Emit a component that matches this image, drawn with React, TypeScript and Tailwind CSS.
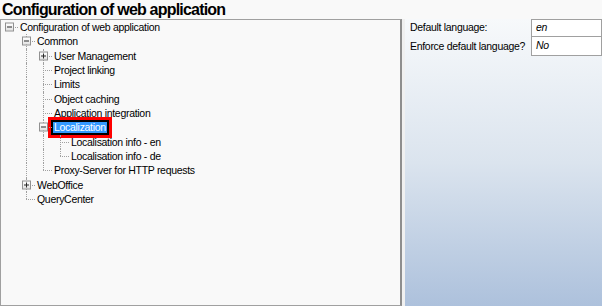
import React from "react";

type Node = { label: string; children?: Node[]; expanded?: boolean; hasChildren?: boolean; selected?: boolean };

const tree: Node = {
  label: "Configuration of web application",
  expanded: true,
  children: [
    {
      label: "Common",
      expanded: true,
      children: [
        { label: "User Management", hasChildren: true },
        { label: "Project linking" },
        { label: "Limits" },
        { label: "Object caching" },
        { label: "Application integration" },
        {
          label: "Localization",
          expanded: true,
          selected: true,
          children: [{ label: "Localisation info - en" }, { label: "Localisation info - de" }],
        },
        { label: "Proxy-Server for HTTP requests" },
      ],
    },
    { label: "WebOffice", hasChildren: true },
    { label: "QueryCenter" },
  ],
};

type Row = { node: Node; depth: number; moreAt: boolean[]; isLast: boolean };

function flatten(n: Node, depth: number, moreAt: boolean[], isLast: boolean, out: Row[]) {
  out.push({ node: n, depth, moreAt, isLast });
  if (n.expanded && n.children) {
    n.children.forEach((c, i) => {
      const last = i === n.children!.length - 1;
      flatten(c, depth + 1, [...moreAt, depth === 0 ? false : !isLast], last, out);
    });
  }
}

function Expander({ open }: { open: boolean }) {
  return (
    <div className="absolute left-[4px] top-1/2 -translate-y-1/2 w-[9px] h-[9px] border border-[#919191] bg-gradient-to-b from-white to-[#e2e2e2] flex items-center justify-center">
      <div className="relative w-[5px] h-[5px]">
        <div className="absolute left-0 top-[2px] w-[5px] h-[1px] bg-[#2b2b2b]" />
        {!open && <div className="absolute top-0 left-[2px] w-[1px] h-[5px] bg-[#2b2b2b]" />}
      </div>
    </div>
  );
}

function TreeRow({ row }: { row: Row }) {
  const { node, depth, moreAt, isLast } = row;
  const hasKids = !!(node.children || node.hasChildren);
  const cols = [];
  for (let k = 0; k < depth; k++) {
    cols.push(
      <div key={k} className="relative w-[17px] h-full shrink-0">
        {moreAt[k + 1] && <div className="absolute left-[8px] top-0 bottom-0 border-l border-dotted border-[#a0a0a0]" />}
      </div>
    );
  }
  return (
    <div className="flex h-[14.33px] items-stretch">
      {cols}
      <div className="relative w-[17px] h-full shrink-0">
        {depth > 0 && (
          <div
            className={
              "absolute left-[8px] top-0 border-l border-dotted border-[#a0a0a0] " + (isLast ? "h-1/2" : "bottom-0")
            }
          />
        )}
        <div className="absolute left-[8px] right-0 top-1/2 border-t border-dotted border-[#a0a0a0]" />
        {hasKids && <Expander open={!!node.expanded} />}
      </div>
      {node.selected ? (
        <span className="ml-[-1px] h-full flex items-center px-[1px] bg-[#3399ff] text-white border-2 border-black outline-[3px] outline-solid outline-[#ff0000] whitespace-nowrap leading-none">
          {node.label}
        </span>
      ) : (
        <span className="ml-[2px] h-full flex items-center text-black whitespace-nowrap leading-none">{node.label}</span>
      )}
    </div>
  );
}

export default function App() {
  const rows: Row[] = [];
  flatten(tree, 0, [false], true, rows);
  return (
    <div
      className="w-[602px] h-[306px] bg-[#f9f9f9] flex flex-col overflow-hidden"
      style={{ fontFamily: '"Liberation Sans", Arial, sans-serif' }}
    >
      <div className="h-[19px] pl-[2px] text-[16px] font-bold leading-[20px] tracking-[-0.8px] text-black">
        Configuration of web application
      </div>
      <div className="flex flex-1 min-h-0 text-[10.5px] tracking-[-0.3px]">
        <div className="w-[402px] border-t border-l border-b border-r-2 border-[#a0a0a0] border-r-[#8e8e8e] bg-[#f9f9f9] shrink-0">
          {rows.map((r, i) => (
            <TreeRow key={i} row={r} />
          ))}
        </div>
        <div className="w-[3px] shrink-0 bg-[#f0f0f0]" />
        <div className="flex-1 bg-gradient-to-b from-[#f7f9fb] via-[#dbe4ee] to-[#adc1dc]">
          <div className="flex h-[18px]">
            <div className="w-[126px] pl-[5px] flex items-center text-black whitespace-nowrap">Default language:</div>
            <div className="flex-1 border border-[#a0a0a0] bg-white pl-[4px] flex items-center italic">en</div>
          </div>
          <div className="flex h-[19px]">
            <div className="w-[126px] pl-[5px] flex items-center text-black whitespace-nowrap">Enforce default language?</div>
            <div className="flex-1 border border-t-0 border-[#a0a0a0] bg-white pl-[4px] flex items-center italic">No</div>
          </div>
        </div>
      </div>
    </div>
  );
}
